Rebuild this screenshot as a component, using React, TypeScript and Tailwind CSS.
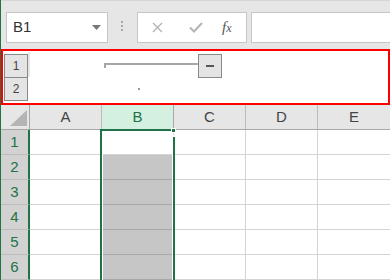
import React from "react";

const cols = ["A", "B", "C", "D", "E"];
const rows = [1, 2, 3, 4, 5, 6];

export default function App() {
  return (
    <div className="w-[390px] h-[280px] overflow-hidden bg-white border-l border-[#217346] font-['Liberation_Sans',Arial,sans-serif] relative">
      {/* Formula bar */}
      <div className="h-[49px] bg-[#e6e6e6] flex items-start pt-[11px] border-t border-[#d6d6d6]">
        <div className="ml-[5px] w-[102px] h-[31px] bg-white border border-[#c6c6c6] flex items-center justify-between pl-[6px] pr-[6px]">
          <span className="text-[15px] text-[#333]">B1</span>
          <svg width="9" height="5" viewBox="0 0 9 5">
            <path d="M0 0 L9 0 L4.5 5 Z" fill="#777" />
          </svg>
        </div>
        <div className="ml-[13px] mt-[9px] flex flex-col gap-[2px]">
          <span className="block w-[2px] h-[2px] bg-[#a8a8a8]" />
          <span className="block w-[2px] h-[2px] bg-[#a8a8a8]" />
          <span className="block w-[2px] h-[2px] bg-[#a8a8a8]" />
        </div>
        <div className="ml-[14px] w-[110px] h-[31px] bg-white border border-[#c6c6c6] flex items-center">
          <svg className="ml-[14px]" width="11" height="11" viewBox="0 0 11 11">
            <path d="M1 1 L10 10 M10 1 L1 10" stroke="#b4b4b4" strokeWidth="1.4" />
          </svg>
          <svg className="ml-[26px]" width="14" height="11" viewBox="0 0 14 11">
            <path d="M1 5.5 L5 9.5 L13 1" stroke="#b4b4b4" strokeWidth="2" fill="none" />
          </svg>
          <span className="ml-[19px] text-[15px] italic text-[#555] font-['Liberation_Serif',serif] leading-none">
            f<span className="text-[12px]">x</span>
          </span>
        </div>
        <div className="ml-[4px] flex-1 h-[31px] bg-white border border-[#c6c6c6] border-r-0" />
      </div>

      {/* Outline area */}
      <div className="h-[56px] border-2 border-[#ff0000] relative">
        <div className="absolute left-[1px] top-[3px] flex flex-col">
          <div className="w-[24px] h-[24px] bg-[#e4e4e4] border border-[#8a8a8a] flex items-center justify-center text-[12px] text-[#444]">1</div>
          <div className="w-[24px] h-[24px] -mt-px bg-[#e4e4e4] border border-[#8a8a8a] flex items-center justify-center text-[12px] text-[#444]">2</div>
        </div>
        <div className="absolute left-[25px] top-[1px] w-[2px] h-[25px] bg-[#e6e6e6]" />
        <div className="absolute left-[101px] top-[12px] w-[95px] h-[2px] bg-[#a6a6a6]" />
        <div className="absolute left-[101px] top-[12px] w-[2px] h-[5px] bg-[#a6a6a6]" />
        <div className="absolute left-[195px] top-[3px] w-[24px] h-[24px] bg-[#e4e4e4] border border-[#8a8a8a] flex items-center justify-center">
          <span className="block w-[8px] h-[2px] bg-[#555]" />
        </div>
        <div className="absolute left-[135px] top-[37px] w-[2px] h-[2px] bg-[#9a9a9a]" />
      </div>

      {/* Grid */}
      <div className="relative grid grid-cols-[29px_72px_72px_72px_72px_73px]">
        <div className="h-[25px] bg-[#e6e6e6] border-b border-r border-[#a8a8a8] relative">
          <svg className="absolute right-[2px] bottom-[3px]" width="17" height="16" viewBox="0 0 17 16">
            <path d="M0 16 L17 0 L17 16 Z" fill="#b4b4b4" />
          </svg>
        </div>
        {cols.map((c) => (
          <div
            key={c}
            className={
              c === "B"
                ? "h-[25px] bg-[#d3f0e0] border-b border-r border-[#a8a8a8] flex items-center justify-center text-[15px] text-[#217346]"
                : "h-[25px] bg-[#e6e6e6] border-b border-r border-[#bcbcbc] border-b-[#a8a8a8] flex items-center justify-center text-[15px] text-[#444]"
            }
          >
            {c}
          </div>
        ))}
        {rows.map((r) => (
          <React.Fragment key={r}>
            <div className="h-[25px] bg-[#d2d2d2] border-b border-[#bcbcbc] border-r-2 border-r-[#217346] flex items-center justify-center text-[15px] text-[#217346]">
              {r}
            </div>
            {cols.map((c) => (
              <div
                key={c}
                className={
                  c === "B" && r > 1
                    ? "h-[25px] bg-[#c6c6c6] border-b border-[#a8a8a8]"
                    : "h-[25px] bg-white border-b border-r border-[#d4d4d4]"
                }
              />
            ))}
          </React.Fragment>
        ))}

        {/* Column B selection */}
        <div className="absolute left-[99px] top-[24px] w-[75px] h-[160px] border-2 border-[#217346] border-r-0" />
        <div className="absolute left-[172px] top-[30px] w-[2px] h-[160px] bg-[#217346] border-t-2 border-white" />
        <div className="absolute left-[101px] top-[26px] w-[1px] h-[160px] bg-white" />
        <div className="absolute left-[171px] top-[26px] w-[1px] h-[160px] bg-white" />
        <div className="absolute left-[170px] top-[23px] w-[5px] h-[5px] bg-[#217346] border border-white" />
      </div>
    </div>
  );
}
